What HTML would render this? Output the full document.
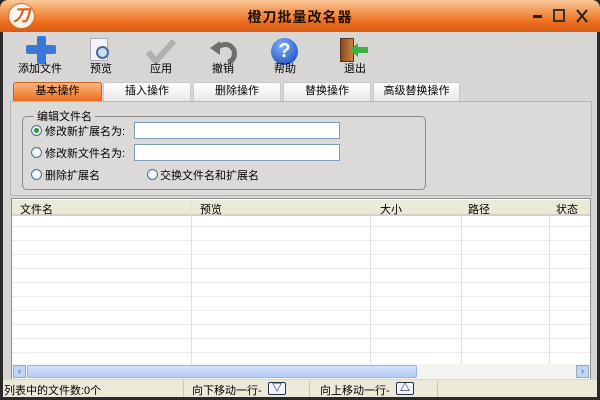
<!DOCTYPE html><html><head><meta charset="utf-8"><style>
*{margin:0;padding:0;box-sizing:border-box}
body{width:600px;height:400px;overflow:hidden;background:#2a2a2a;font-family:"Liberation Sans","Noto Sans CJK SC",sans-serif;font-size:11px;color:#000;position:relative}
.a{position:absolute}
.title{left:0;top:0;width:600px;height:32px;border-radius:8px 8px 0 0;background:linear-gradient(#fbc79a 0,#f39a55 35%,#ec6d1e 70%,#d55a12 100%)}
.main{left:3px;top:32px;width:594px;height:365px;background:#d8d6d4}
.tb{font-size:11px;text-align:center}
.tab{top:82px;height:19px;background:linear-gradient(#fff,#e8e8e8);border:1px solid #c8c8c8;border-bottom:none;border-radius:3px 3px 0 0;text-align:center;line-height:17px;font-size:11px}
input{position:absolute;border:1px solid #7f9db9;background:#fff;height:17px}
.rad{width:11px;height:11px;border-radius:50%;border:1px solid #4a6f9b;background:radial-gradient(#fff,#dde4ec)}
.hd{top:200px;height:16px;background:#ebe9d8;border-bottom:2px solid #d6d2c2;font-size:11px;line-height:15px}
</style></head><body>
<div class="a title"></div>
<div class="a" style="left:8px;top:3px;width:27px;height:26px;border-radius:50%;background:radial-gradient(circle at 40% 35%,#fff,#f3e3d3);border:1px solid #d07030;color:#e06010;font:italic bold 17px 'Liberation Sans','Noto Sans CJK SC',sans-serif;text-align:center;line-height:24px">刀</div>
<div class="a" style="left:0;width:600px;top:7px;text-align:center;font:bold 14px 'Noto Sans CJK SC',sans-serif;color:#201000;letter-spacing:1px">橙刀批量改名器</div>
<div class="a" style="left:533px;top:15px;width:9px;height:3px;background:#222"></div>
<div class="a" style="left:553px;top:9px;width:12px;height:13px;border:2px solid #333"></div>
<svg class="a" style="left:575px;top:8px" width="14" height="16"><path d="M2 2 L12 14 M12 2 L2 14" stroke="#222" stroke-width="2"/></svg>
<div class="a main"></div>
<!-- toolbar -->
<div class="a" style="left:26px;top:45px;width:30px;height:9px;background:#3a78d8;border-radius:2px"></div>
<div class="a" style="left:37px;top:36px;width:9px;height:28px;background:#3a78d8;border-radius:2px"></div>
<div class="a tb" style="left:18px;top:60px">添加文件</div>
<div class="a" style="left:90px;top:38px;width:18px;height:23px;background:#f4f4f8;border:1px solid #aab"></div>
<div class="a" style="left:96px;top:46px;width:13px;height:13px;border-radius:50%;border:2px solid #4a6a9a;background:#cde"></div>
<div class="a tb" style="left:90px;top:60px">预览</div>
<svg class="a" style="left:145px;top:38px" width="32" height="26"><path d="M3 14 L11 23 L29 3" stroke="#b0b0b0" stroke-width="6" fill="none"/></svg>
<div class="a tb" style="left:150px;top:60px">应用</div>
<svg class="a" style="left:208px;top:38px" width="30" height="26"><path d="M8 10 Q20 2 26 12 Q28 22 20 24" stroke="#6e6e6e" stroke-width="5" fill="none"/><path d="M2 10 L12 3 L12 17 Z" fill="#6e6e6e"/></svg>
<div class="a tb" style="left:212px;top:60px">撤销</div>
<div class="a" style="left:271px;top:38px;width:27px;height:27px;border-radius:50%;background:radial-gradient(circle at 40% 30%,#7ab0ff,#1040b0);color:#fff;font:bold 20px 'Liberation Sans';text-align:center;line-height:27px">?</div>
<div class="a tb" style="left:274px;top:60px">帮助</div>
<div class="a" style="left:340px;top:38px;width:14px;height:24px;background:linear-gradient(90deg,#8a4a20,#d08040);border:1px solid #603010"></div>
<svg class="a" style="left:348px;top:42px" width="22" height="16"><path d="M2 8 L10 1 L10 5 L20 5 L20 11 L10 11 L10 15 Z" fill="#3cb040"/></svg>
<div class="a tb" style="left:344px;top:60px">退出</div>
<!-- tabs -->
<div class="a tab" style="left:13px;width:89px;background:linear-gradient(#fbb680,#ec6d1e);border-color:#d06020">基本操作</div>
<div class="a tab" style="left:103px;width:88px">插入操作</div>
<div class="a tab" style="left:193px;width:88px">删除操作</div>
<div class="a tab" style="left:283px;width:88px">替换操作</div>
<div class="a tab" style="left:373px;width:87px">高级替换操作</div>
<div class="a" style="left:10px;top:101px;width:582px;height:95px;background:#dcdad9;border:1px solid #b8b6b4"></div>
<div class="a" style="left:22px;top:116px;width:404px;height:74px;border:1px solid #8d8b8a;border-radius:5px"></div>
<div class="a" style="left:34px;top:108px;background:#dcdad9;padding:0 3px">编辑文件名</div>
<div class="a rad" style="left:31px;top:125px"><div style="width:5px;height:5px;border-radius:50%;background:#2c9a2c;margin:2px"></div></div>
<div class="a" style="left:45px;top:123px">修改新扩展名为:</div>
<input style="left:134px;top:122px;width:206px">
<div class="a rad" style="left:31px;top:147px"></div>
<div class="a" style="left:45px;top:145px">修改新文件名为:</div>
<input style="left:134px;top:144px;width:206px">
<div class="a rad" style="left:31px;top:169px"></div>
<div class="a" style="left:45px;top:167px">删除扩展名</div>
<div class="a rad" style="left:147px;top:169px"></div>
<div class="a" style="left:160px;top:167px">交换文件名和扩展名</div>
<!-- list -->
<div class="a" style="left:11px;top:198px;width:580px;height:181px;background:#fff;border:1px solid #8f8f8f;
background-image:repeating-linear-gradient(#fff 0 13px,#ececec 13px 14px)"></div>
<div class="a hd" style="left:12px;width:578px"></div>
<div class="a" style="left:20px;top:201px">文件名</div>
<div class="a" style="left:200px;top:201px">预览</div>
<div class="a" style="left:380px;top:201px">大小</div>
<div class="a" style="left:468px;top:201px">路径</div>
<div class="a" style="left:556px;top:201px">状态</div>
<div class="a" style="left:191px;top:200px;width:1px;height:164px;background:#e2e0d8"></div>
<div class="a" style="left:370px;top:200px;width:1px;height:164px;background:#e2e0d8"></div>
<div class="a" style="left:461px;top:200px;width:1px;height:164px;background:#e2e0d8"></div>
<div class="a" style="left:549px;top:200px;width:1px;height:164px;background:#e2e0d8"></div>
<div class="a" style="left:12px;top:364px;width:578px;height:15px;background:#f4f4f0"></div>
<div class="a" style="left:13px;top:365px;width:13px;height:13px;background:#c0d4f8;border:1px solid #9ab;color:#4d6185;font-size:10px;text-align:center;line-height:11px">‹</div>
<div class="a" style="left:27px;top:365px;width:390px;height:13px;background:linear-gradient(#d4e2ff,#b4ccf4);border:1px solid #9ab4e4;border-radius:2px"></div>
<div class="a" style="left:576px;top:365px;width:13px;height:13px;background:#c0d4f8;border:1px solid #9ab;color:#4d6185;font-size:10px;text-align:center;line-height:11px">›</div>
<!-- status -->
<div class="a" style="left:3px;top:380px;width:594px;height:17px;background:#ece9d8"></div>
<div class="a" style="left:4px;top:382px">列表中的文件数:0个</div>
<div class="a" style="left:192px;top:382px">向下移动一行-</div>
<div class="a" style="left:268px;top:382px;width:18px;height:13px;border:1px solid #234;border-radius:2px;background:#f0f4ff;font-size:10px;text-align:center;line-height:11px;font-weight:bold">▽</div>
<div class="a" style="left:320px;top:382px">向上移动一行-</div>
<div class="a" style="left:396px;top:382px;width:18px;height:13px;border:1px solid #234;border-radius:2px;background:#f0f4ff;font-size:10px;text-align:center;line-height:11px;font-weight:bold">△</div>
<div class="a" style="left:183px;top:381px;width:1px;height:16px;background:#c8c5b0"></div>
<div class="a" style="left:309px;top:381px;width:1px;height:16px;background:#c8c5b0"></div>
<div class="a" style="left:437px;top:381px;width:1px;height:16px;background:#c8c5b0"></div>
</body></html>
